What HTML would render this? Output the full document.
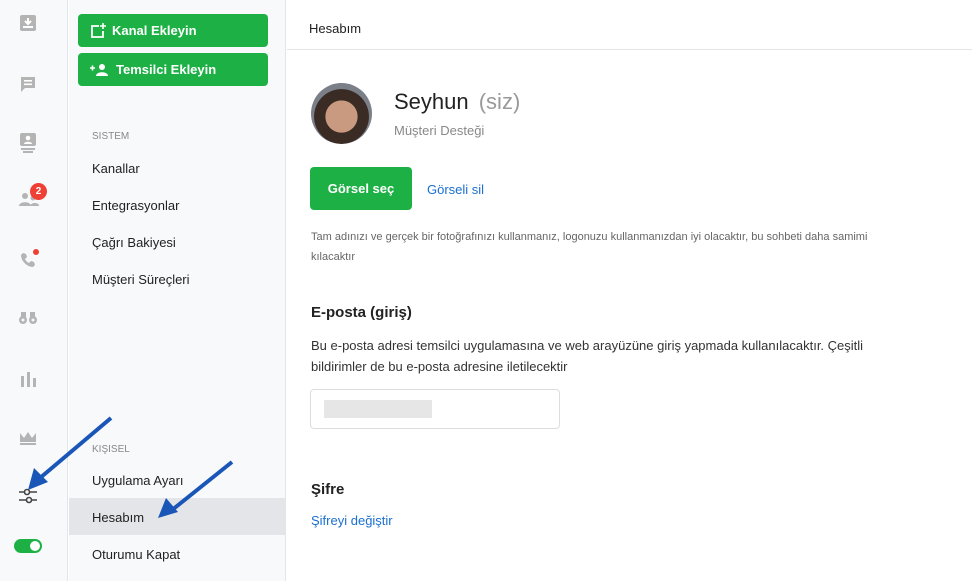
<!DOCTYPE html>
<html><head><meta charset="utf-8"><style>
*{box-sizing:border-box;margin:0;padding:0}
body{width:972px;height:581px;overflow:hidden;background:#fff;font-family:"Liberation Sans",sans-serif;position:relative;color:#222}
#rail{position:absolute;left:0;top:0;width:68px;height:581px;background:#f8f9fb;border-right:1px solid #e3e5e8}
#side{position:absolute;left:69px;top:0;width:217px;height:581px;background:#f8f9fb;border-right:1px solid #e3e5e8}
.btn{position:absolute;left:9px;width:190px;height:33px;background:#1db145;border-radius:4px;color:#fff;font-weight:bold;font-size:13px;display:flex;align-items:center;padding-left:12px;gap:6px}
.sec{position:absolute;left:23px;font-size:10px;color:#888}
.it{position:absolute;left:23px;font-size:13px;color:#222}
.ic{position:absolute;left:18px}
#main{position:absolute;left:287px;top:0;right:0;height:581px}
.a{position:absolute}
</style></head><body>
<div id="rail">
<svg class="ic" style="top:13px" width="20" height="20" viewBox="0 0 20 20"><rect x="2" y="2" width="16" height="16" rx="2" fill="#b4b4b4"/><path d="M10 5v6M7 8l3 3 3-3" stroke="#fff" stroke-width="2" fill="none"/><rect x="5" y="13" width="10" height="2" fill="#fff"/></svg>
<svg class="ic" style="top:74px" width="20" height="20" viewBox="0 0 20 20"><path d="M3 3h14v11H7l-4 4z" fill="#b4b4b4"/><rect x="6" y="6" width="8" height="1.6" fill="#fff"/><rect x="6" y="9.5" width="8" height="1.6" fill="#fff"/></svg>
<svg class="ic" style="top:132px" width="20" height="22" viewBox="0 0 20 22"><rect x="2" y="1" width="16" height="13" rx="2" fill="#b4b4b4"/><circle cx="10" cy="6" r="2.3" fill="#fff"/><path d="M6 12c0-3 8-3 8 0z" fill="#fff"/><rect x="3" y="16" width="14" height="2" fill="#b4b4b4"/><rect x="5" y="19" width="10" height="2" fill="#b4b4b4"/></svg>
<svg class="ic" style="top:190px" width="22" height="20" viewBox="0 0 22 20"><circle cx="7" cy="6" r="3" fill="#b4b4b4"/><path d="M1 16c0-5 12-5 12 0z" fill="#b4b4b4"/><circle cx="15" cy="8" r="2.5" fill="#b4b4b4"/><path d="M12 16c1-4 9-4 9 0z" fill="#b4b4b4"/></svg>
<div class="a" style="left:30px;top:183px;width:17px;height:17px;border-radius:50%;background:#ef4036;color:#fff;font-size:10px;font-weight:bold;text-align:center;line-height:17px">2</div>
<svg class="ic" style="top:250px" width="20" height="20" viewBox="0 0 20 20"><path d="M5 3l3 1 1 3-2 2c1 2 2 3 4 4l2-2 3 1 1 3-2 2C9 17 3 11 3 5z" fill="#b4b4b4"/></svg>
<div class="a" style="left:33px;top:249px;width:6px;height:6px;border-radius:50%;background:#ef4036"></div>
<svg class="ic" style="top:310px" width="20" height="16" viewBox="0 0 20 16"><circle cx="5" cy="10" r="4" fill="#b4b4b4"/><circle cx="15" cy="10" r="4" fill="#b4b4b4"/><rect x="3" y="2" width="5" height="6" fill="#b4b4b4"/><rect x="12" y="2" width="5" height="6" fill="#b4b4b4"/><circle cx="5" cy="10" r="1.5" fill="#f8f9fb"/><circle cx="15" cy="10" r="1.5" fill="#f8f9fb"/></svg>
<svg class="ic" style="top:370px" width="20" height="18" viewBox="0 0 20 18"><rect x="3" y="6" width="3" height="11" fill="#b4b4b4"/><rect x="9" y="2" width="3" height="15" fill="#b4b4b4"/><rect x="15" y="8" width="3" height="9" fill="#b4b4b4"/></svg>
<svg class="ic" style="top:430px" width="20" height="16" viewBox="0 0 20 16"><path d="M2 3l4 5 4-6 4 6 4-5v9H2z" fill="#b4b4b4"/><rect x="2" y="13" width="16" height="2" fill="#b4b4b4"/></svg>
<svg class="ic" style="top:487px" width="20" height="18" viewBox="0 0 20 18"><path d="M1 5h18M1 13h18" stroke="#444" stroke-width="1.6"/><circle cx="9" cy="5" r="2.5" fill="#f8f9fb" stroke="#444" stroke-width="1.6"/><circle cx="11" cy="13" r="2.5" fill="#f8f9fb" stroke="#444" stroke-width="1.6"/></svg>
<div class="a" style="left:14px;top:539px;width:28px;height:14px;border-radius:7px;background:#1db145"><div class="a" style="right:2px;top:2px;width:10px;height:10px;border-radius:50%;background:#fff"></div></div>
</div>
<div id="side">
<div class="btn" style="top:14px"><svg width="16" height="16" viewBox="0 0 16 16"><path d="M9 3H2v11h11V8" stroke="#fff" stroke-width="1.8" fill="none"/><path d="M13 0v6M10 3h6" stroke="#fff" stroke-width="1.6"/></svg>Kanal Ekleyin</div>
<div class="btn" style="top:53px"><svg width="20" height="14" viewBox="0 0 20 14"><path d="M0 5h5M2.5 2.5v5" stroke="#fff" stroke-width="1.6"/><circle cx="12" cy="4" r="3" fill="#fff"/><path d="M6 13c0-5 12-5 12 0z" fill="#fff"/></svg>Temsilci Ekleyin</div>
<div class="sec" style="top:131px">SISTEM</div>
<div class="it" style="top:161px">Kanallar</div>
<div class="it" style="top:198px">Entegrasyonlar</div>
<div class="it" style="top:235px">Çağrı Bakiyesi</div>
<div class="it" style="top:272px">Müşteri Süreçleri</div>
<div class="sec" style="top:444px">KIŞISEL</div>
<div class="it" style="top:473px">Uygulama Ayarı</div>
<div class="a" style="left:0;top:498px;width:216px;height:37px;background:#e4e5e8"></div>
<div class="it" style="top:510px">Hesabım</div>
<div class="it" style="top:547px">Oturumu Kapat</div>
</div>
<div id="main">
<div class="a" style="left:22px;top:21px;font-size:13px">Hesabım</div>
<div class="a" style="left:0;right:0;top:49px;height:1px;background:#e3e5e8"></div>
<div class="a" style="left:24px;top:83px;width:61px;height:61px;border-radius:50%;background:radial-gradient(circle at 50% 55%,#c99a80 0 35%,#3a2c25 36% 60%,#7a7f88 61%)"></div>
<div class="a" style="left:107px;top:89px;font-size:22px;color:#222">Seyhun <span style="color:#999;margin-left:4px">(siz)</span></div>
<div class="a" style="left:107px;top:123px;font-size:13px;color:#888">Müşteri Desteği</div>
<div class="a" style="left:23px;top:167px;width:102px;height:43px;background:#1db145;border-radius:4px;color:#fff;font-weight:bold;font-size:13px;text-align:center;line-height:43px">Görsel seç</div>
<div class="a" style="left:140px;top:182px;font-size:13px;color:#1a6fd0">Görseli sil</div>
<div class="a" style="left:24px;top:227px;width:585px;font-size:11px;color:#666;line-height:20px">Tam adınızı ve gerçek bir fotoğrafınızı kullanmanız, logonuzu kullanmanızdan iyi olacaktır, bu sohbeti daha samimi kılacaktır</div>
<div class="a" style="left:24px;top:304px;font-size:15px;font-weight:bold">E-posta (giriş)</div>
<div class="a" style="left:24px;top:335px;width:600px;font-size:13px;color:#333;line-height:21px">Bu e-posta adresi temsilci uygulamasına ve web arayüzüne giriş yapmada kullanılacaktır. Çeşitli bildirimler de bu e-posta adresine iletilecektir</div>
<div class="a" style="left:23px;top:389px;width:250px;height:40px;border:1px solid #ddd;border-radius:4px"><div class="a" style="left:13px;top:10px;width:108px;height:18px;background:#e6e6e6"></div></div>
<div class="a" style="left:24px;top:481px;font-size:15px;font-weight:bold">Şifre</div>
<div class="a" style="left:24px;top:513px;font-size:13px;color:#1a6fd0">Şifreyi değiştir</div>
</div>
<svg class="a" style="left:0;top:0" width="300" height="581" viewBox="0 0 300 581"><path d="M111 418L40 478" stroke="#1a56b8" stroke-width="4"/><path d="M28 490l6-22 14 14z" fill="#1a56b8"/><path d="M232 462L172 510" stroke="#1a56b8" stroke-width="4"/><path d="M158 518l8-20 12 14z" fill="#1a56b8"/></svg>
</body></html>
